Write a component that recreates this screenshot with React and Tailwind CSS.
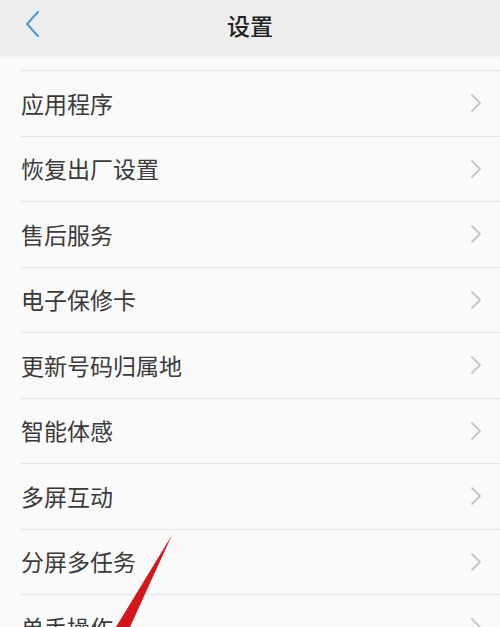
const items = [
  '应用程序',
  '恢复出厂设置',
  '售后服务',
  '电子保修卡',
  '更新号码归属地',
  '智能体感',
  '多屏互动',
  '分屏多任务',
  '单手操作',
];

const cjk = { fontFamily: '"Noto Sans CJK SC", "Noto Sans", sans-serif' };

function Chevron() {
  return (
    <svg width="12" height="20" viewBox="0 0 12 20" fill="none" className="text-[#c6c6c6]">
      <path d="M2 2 L10 10 L2 18" stroke="currentColor" strokeWidth="1.8" strokeLinecap="round" strokeLinejoin="round" />
    </svg>
  );
}

export default function App() {
  return (
    <div className="relative w-[500px] h-[627px] overflow-hidden bg-[#fafafa]" style={cjk}>
      <header className="relative h-[55px] bg-[#ededed] flex items-center justify-center pb-[5px] shadow-[0_1px_3px_rgba(0,0,0,0.08)] z-10">
        <button className="absolute left-[22px] top-[9px] text-[#4a9ed6]">
          <svg width="22" height="30" viewBox="0 0 22 30" fill="none">
            <path d="M16 3 L5 15 L16 27" stroke="currentColor" strokeWidth="2.2" strokeLinecap="round" strokeLinejoin="round" />
          </svg>
        </button>
        <h1 className="text-[23px] font-medium text-[#222] leading-none">设置</h1>
      </header>

      <div className="pt-[15px]">
        <ul className="ml-[20px] border-t border-[#e6e6e6]">
          {items.map((name) => (
            <li key={name} className="h-[65.5px] flex items-center justify-between border-b border-[#e6e6e6] pr-[18px]">
              <span className="text-[23px] text-[#3a3a3a] leading-none pl-[1px]">{name}</span>
              <Chevron />
            </li>
          ))}
        </ul>
      </div>

      {/* red annotation arrow */}
      <svg className="absolute left-0 top-0 pointer-events-none" width="500" height="627" viewBox="0 0 500 627">
        <polygon points="172,535 130,627 116,627" fill="#d3161b" />
      </svg>
    </div>
  );
}
